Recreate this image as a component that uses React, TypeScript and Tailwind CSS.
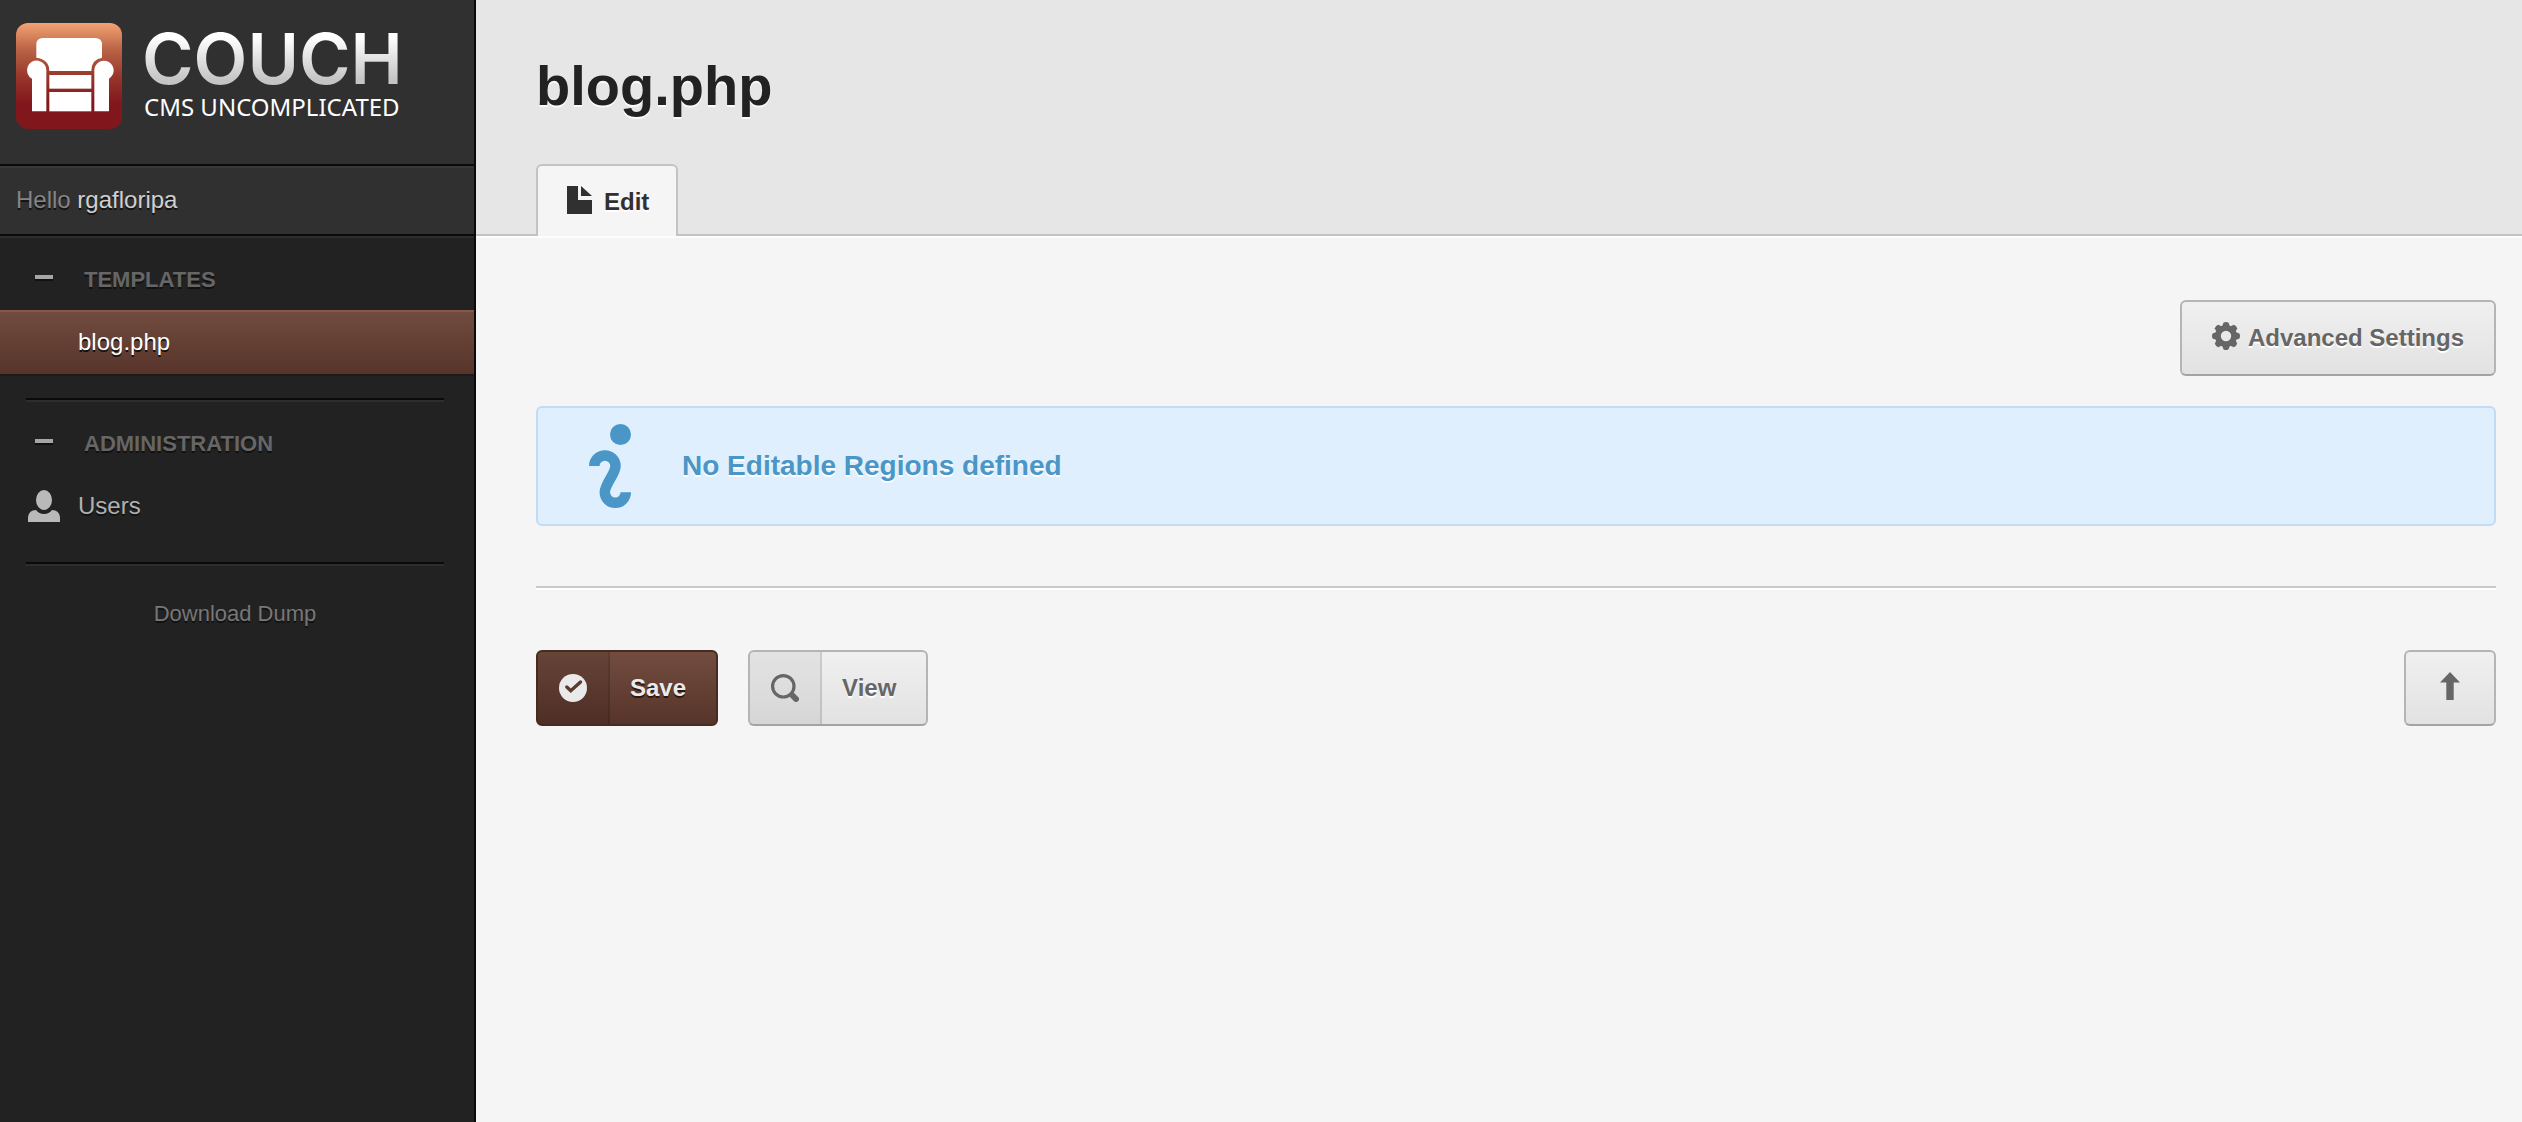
import type { ReactNode } from "react";

const darkShadow = "[text-shadow:0_2px_0_#111]";
const lightShadow = "[text-shadow:0_2px_0_#fff]";

function CouchMark() {
  return (
    <svg viewBox="48 69 318 318" className="size-[106px] shrink-0" aria-hidden="true">
      <defs>
        <linearGradient id="mark" x1="0" y1="0" x2="0" y2="1">
          <stop offset="0" stopColor="#f3a373" />
          <stop offset="0.25" stopColor="#bb6346" />
          <stop offset="0.5" stopColor="#98382c" />
          <stop offset="0.75" stopColor="#82181d" />
          <stop offset="1" stopColor="#80171c" />
        </linearGradient>
      </defs>
      <rect x="48" y="69" width="318" height="318" rx="36" fill="url(#mark)" />
      <g fill="#fff">
        <path d="M109 134 Q109 114 129 114 H286 Q306 114 306 134 V173 Q274 178 274 213 H148 Q148 178 109 173 Z" />
        <path d="M96 334 V236 A29 29 0 1 1 139 211 V334 Z" />
        <path d="M327 334 V236 A29 29 0 1 0 283 211 V334 Z" />
        <rect x="148" y="225" width="126" height="41" />
        <rect x="148" y="276" width="126" height="58" />
      </g>
    </svg>
  );
}

function UserIcon() {
  return (
    <svg viewBox="0 0 32 32" className="size-8 fill-[#b9b9b9]" aria-hidden="true">
      <ellipse cx="16" cy="10" rx="8" ry="10" />
      <path d="M0 32 V27 Q1 20 8 20 Q11 24 16 24 Q21 24 24 20 Q31 20 32 27 V32 Z" />
    </svg>
  );
}

function FileIcon() {
  return (
    <svg viewBox="0 0 25 28" className="h-7 w-[25px] fill-[#303030]" aria-hidden="true">
      <path d="M0 0 H11 V14 H25 V28 H0 Z" />
      <path d="M14 0 L25 10 H14 Z" />
    </svg>
  );
}

function GearIcon() {
  return (
    <svg viewBox="-14 -14 28 28" className="size-7 fill-[#666]" aria-hidden="true">
      <path
        fillRule="evenodd"
        d="M-10.8 0 A10.8 10.8 0 1 0 10.8 0 A10.8 10.8 0 1 0 -10.8 0 Z M-5.2 0 A5.2 5.2 0 1 1 5.2 0 A5.2 5.2 0 1 1 -5.2 0 Z"
      />
      {[0, 45, 90, 135, 180, 225, 270, 315].map((a) => (
        <path key={a} transform={`rotate(${a})`} d="M-4.2 -9 L-2.4 -13.4 Q0 -14.6 2.4 -13.4 L4.2 -9 Z" />
      ))}
    </svg>
  );
}

function InfoIcon() {
  return (
    <svg viewBox="588 423 44 86" className="h-[86px] w-11 shrink-0" aria-hidden="true">
      <circle cx="620.5" cy="434.5" r="10.5" fill="#4a96c6" />
      <path
        d="M594.3 466 A10.6 10.6 0 0 1 615.5 466 C615.5 474 604.8 484 604.8 492.3 A10.5 10.5 0 0 0 625.8 492.3"
        fill="none"
        stroke="#4a96c6"
        strokeWidth="10.5"
      />
    </svg>
  );
}

function CheckIcon() {
  return (
    <svg viewBox="0 0 28 28" className="size-7" aria-hidden="true">
      <circle cx="14" cy="14" r="14" fill="#eaeaea" />
      <path d="M7.8 13 L11.8 16.8 L21.5 8" fill="none" stroke="#5c3a2e" strokeWidth="3.4" strokeLinecap="round" />
    </svg>
  );
}

function SearchIcon() {
  return (
    <svg viewBox="0 0 28 28" className="size-7" fill="none" stroke="#666" aria-hidden="true">
      <circle cx="12.3" cy="12.3" r="10.7" strokeWidth="3.2" />
      <path d="M21 21 L25 25" strokeWidth="6" strokeLinecap="round" />
    </svg>
  );
}

function ArrowUpIcon() {
  return (
    <svg viewBox="0 0 20 28" className="mb-1 h-7 w-5 fill-[#666]" aria-hidden="true">
      <path d="M10 0 L20 10.5 H13.7 V28 H6.3 V10.5 H0 Z" />
    </svg>
  );
}

function Heading({ children }: { children: ReactNode }) {
  return (
    <h2 className="flex h-[60px] items-center">
      <button type="button" className={`flex w-full items-center text-[22px] leading-7 font-bold text-[#666] ${darkShadow}`}>
        <span className="mr-[31px] mb-1.5 ml-[35px] h-1 w-[18px] bg-[#a6a6a6] shadow-[0_2px_0_#111]" />
        {children}
      </button>
    </h2>
  );
}

function Rule() {
  return <hr className="mt-6 mr-[30px] ml-[26px] h-1 border-t-2 border-[#0a0a0a] bg-[#2d2d2d]" />;
}

const lightButton =
  "flex h-[76px] items-center rounded-md border-2 border-[#b5b5b5] border-b-[#a3a3a3] bg-linear-to-b from-[#f0f0f0] to-[#e2e2e2] text-2xl font-bold text-[#666] [text-shadow:0_2px_0_#fff]";

export default function App() {
  return (
    <div className="flex min-h-screen bg-[#f5f5f5] font-['Liberation_Sans',Arial,sans-serif] text-2xl">
      <aside className="w-[476px] shrink-0 border-r-2 border-[#0a0a0a] bg-[#222]">
        <a href="#home" className="flex h-[166px] border-b-2 border-[#0a0a0a] bg-[#303030] pt-[23px] pl-4">
          <CouchMark />
          <span className="ml-5 flex flex-col">
            <span className="bg-linear-to-b from-white from-20% to-[#c4c4c4] to-80% bg-clip-text font-[Inter] text-[70px] leading-[72px] font-semibold text-transparent">
              COUCH
            </span>
            <span className="ml-0.5 font-['Noto_Sans'] text-2xl leading-6 text-white">CMS UNCOMPLICATED</span>
          </span>
        </a>
        <p className={`flex h-[70px] items-center border-b-2 border-[#0a0a0a] bg-[#303030] pl-4 whitespace-pre text-[#858585] shadow-[inset_0_2px_0_#373737] ${darkShadow}`}>
          Hello <a href="#profile" className="text-[#d0d0d0]">rgafloripa</a>
        </p>
        <nav className="pt-3.5 shadow-[inset_0_2px_0_#2d2d2d]">
          <Heading>TEMPLATES</Heading>
          <a
            href="#blog"
            className={`flex h-16 items-center bg-linear-to-b from-[#724c3f] to-[#57342a] pl-[78px] text-white shadow-[inset_0_2px_0_#84594d,0_2px_0_#1b1b1b] ${darkShadow}`}
          >
            blog.php
          </a>
          <Rule />
          <div className="h-3" />
          <Heading>ADMINISTRATION</Heading>
          <a href="#users" className={`flex h-16 items-center gap-[18px] pl-7 text-[#b0b0b0] ${darkShadow}`}>
            <UserIcon />
            Users
          </a>
          <Rule />
          <a href="#dump" className={`mt-4 flex h-16 items-center justify-center pr-1 text-[22px] text-[#777] ${darkShadow}`}>
            Download Dump
          </a>
        </nav>
      </aside>

      <main className="min-w-0 flex-1">
        <header className="border-b-2 border-[#c3c3c3] bg-[#e6e6e6] pt-[54px] pl-[60px] shadow-[0_2px_0_#fdfdfd]">
          <h1 className="text-[56px] leading-[64px] font-bold text-[#222] [text-shadow:0_2px_0_#fafafa]">blog.php</h1>
          <nav className="mt-[46px] -mb-0.5 flex">
            <a
              href="#edit"
              className={`flex h-[72px] items-center gap-3 rounded-t-md border-2 border-b-0 border-[#c3c3c3] bg-[#f5f5f5] pt-0.5 pr-[27px] pl-[29px] font-bold text-[#303030] ${lightShadow}`}
            >
              <span className="mb-1">
                <FileIcon />
              </span>
              Edit
            </a>
          </nav>
        </header>

        <div className="pt-16 pr-[26px] pl-[60px]">
          <div className="flex justify-end">
            <button type="button" className={`${lightButton} gap-2 px-[30px]`}>
              <span className="mb-1">
                <GearIcon />
              </span>
              Advanced Settings
            </button>
          </div>

          <div
            role="status"
            className={`mt-[30px] flex h-[120px] items-center rounded-md border-2 border-[#c1dcf5] bg-[#dfeffe] pl-[50px] text-[28px] font-bold text-[#4a96c6] ${lightShadow}`}
          >
            <InfoIcon />
            <span className="ml-[50px]">No Editable Regions defined</span>
          </div>

          <hr className="mt-[60px] h-1 border-t-2 border-[#c9c9c9] bg-white" />

          <div className="mt-[60px] flex">
            <button
              type="button"
              className="flex h-[76px] items-center overflow-hidden rounded-md border-2 border-[#472a22] bg-linear-to-b from-[#724c3f] to-[#57342a] font-bold text-[#eaeaea] [text-shadow:0_2px_0_#2a1812]"
            >
              <span className="flex h-full w-[72px] items-center justify-center border-r-2 border-black/10 bg-black/10">
                <CheckIcon />
              </span>
              <span className="pr-[30px] pl-5">Save</span>
            </button>
            <button type="button" className={`${lightButton} ml-[30px] overflow-hidden`}>
              <span className="flex h-full w-[72px] items-center justify-center border-r-2 border-black/10 bg-black/5">
                <SearchIcon />
              </span>
              <span className="pr-[30px] pl-5">View</span>
            </button>
            <button type="button" aria-label="Back to top" className={`${lightButton} ml-auto w-[92px] justify-center`}>
              <ArrowUpIcon />
            </button>
          </div>
        </div>
      </main>
    </div>
  );
}
